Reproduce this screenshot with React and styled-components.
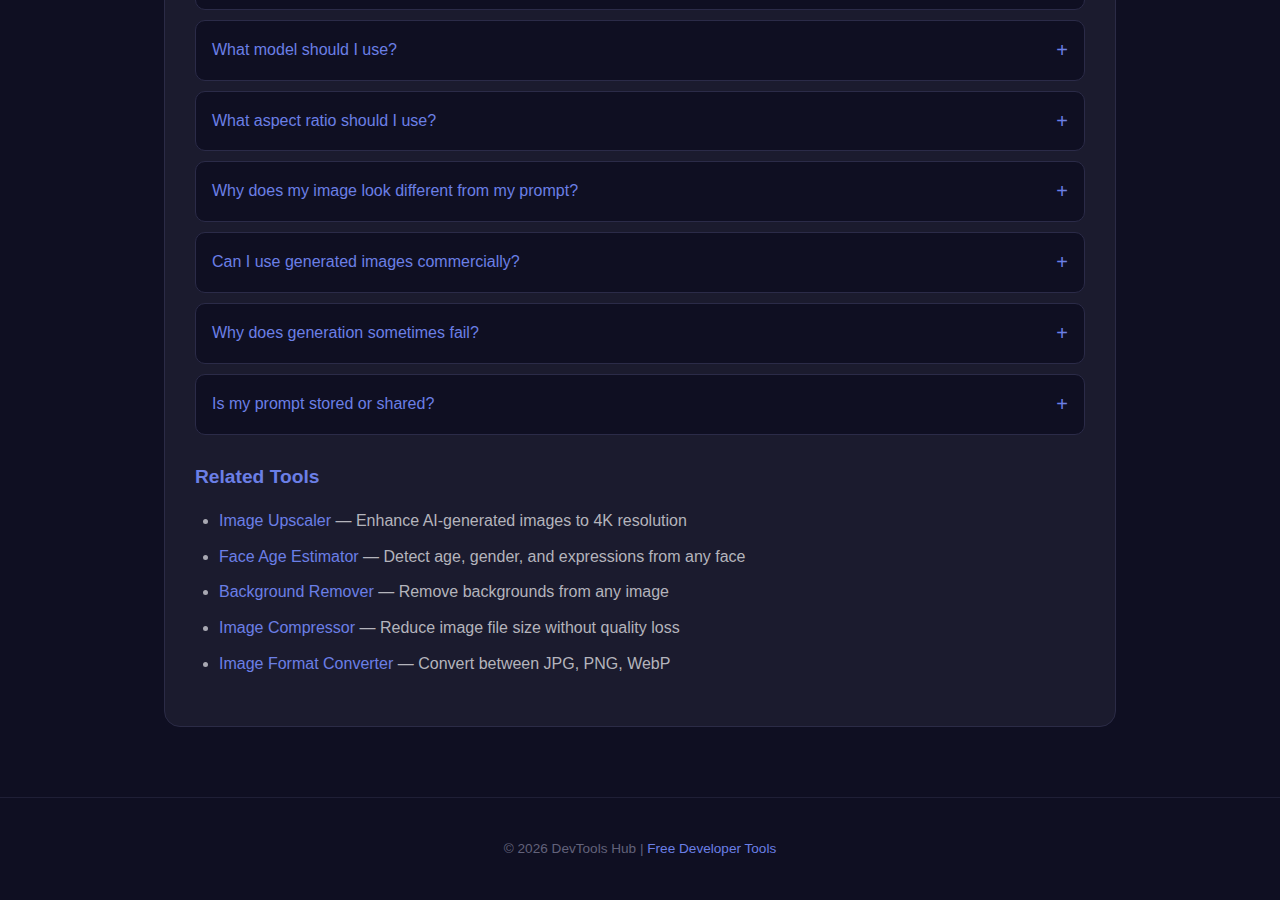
import React from "react";
import styled, { createGlobalStyle } from "styled-components";

const Global = createGlobalStyle`
  html, body { margin: 0; padding: 0; background: #0f0f22; }
  body { font-family: "Liberation Sans", Arial, sans-serif; color: #b4b4c0; overflow: hidden; }
  * { box-sizing: border-box; }
`;

const Main = styled.main`
  margin-top: -82px;
  display: flex;
  justify-content: center;
`;

const Card = styled.section`
  width: 952px;
  background: #1b1b2e;
  border: 1px solid #2b2b46;
  border-radius: 16px;
  padding: 30px 30px 40px;
  margin-bottom: 70px;
`;

const FaqList = styled.div`
  display: flex;
  flex-direction: column;
  gap: 10px;
`;

const FaqItem = styled.div`
  background: #0f0f22;
  border: 1px solid #2b2b48;
  border-radius: 10px;
`;

const Question = styled.button`
  width: 100%;
  display: flex;
  align-items: center;
  justify-content: space-between;
  padding: 20px 16px;
  background: transparent;
  border: 0;
  font-family: inherit;
  font-size: 16px;
  line-height: 18.8px;
  color: #6b7fe6;
  text-align: left;
  cursor: pointer;
`;

const Plus = styled.span`
  font-size: 20px;
  line-height: 18.8px;
  color: #6b7fe6;
`;

const Heading = styled.h3`
  margin: 30px 0 20.7px;
  font-size: 19.2px;
  line-height: 23px;
  font-weight: 700;
  color: #6b7fe6;
`;

const ToolList = styled.ul`
  margin: 0;
  padding-left: 24px;
`;

const ToolItem = styled.li`
  font-size: 16px;
  line-height: 25.6px;
  margin-bottom: 10px;
  color: #b4b4bc;
  &::marker { color: #a8a8b2; }
`;

const Link = styled.a`
  color: #6b7fe6;
  text-decoration: none;
`;

const Footer = styled.footer`
  border-top: 1px solid #1f1f36;
  padding: 40px 20px;
  text-align: center;
  font-size: 13.6px;
  line-height: 21.8px;
  color: #62627a;
`;

const faqs = [
  "How long does generation take?",
  "What model should I use?",
  "What aspect ratio should I use?",
  "Why does my image look different from my prompt?",
  "Can I use generated images commercially?",
  "Why does generation sometimes fail?",
  "Is my prompt stored or shared?",
];

const tools = [
  ["Image Upscaler", "Enhance AI-generated images to 4K resolution"],
  ["Face Age Estimator", "Detect age, gender, and expressions from any face"],
  ["Background Remover", "Remove backgrounds from any image"],
  ["Image Compressor", "Reduce image file size without quality loss"],
  ["Image Format Converter", "Convert between JPG, PNG, WebP"],
];

export default function App() {
  return (
    <>
      <Global />
      <Main>
        <Card>
          <FaqList>
            {faqs.map((q) => (
              <FaqItem key={q}>
                <Question>
                  <span>{q}</span>
                  <Plus>+</Plus>
                </Question>
              </FaqItem>
            ))}
          </FaqList>
          <Heading>Related Tools</Heading>
          <ToolList>
            {tools.map(([name, desc]) => (
              <ToolItem key={name}>
                <Link href="#">{name}</Link> — {desc}
              </ToolItem>
            ))}
          </ToolList>
        </Card>
      </Main>
      <Footer>
        © 2026 DevTools Hub | <Link href="#">Free Developer Tools</Link>
      </Footer>
    </>
  );
}
